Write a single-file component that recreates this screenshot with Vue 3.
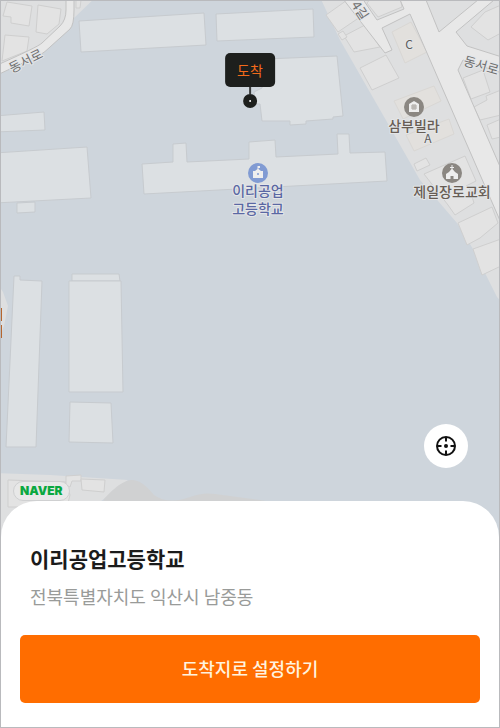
<script setup>
const campus = [
  'M79 21 L204 13 L206 45 L81 52Z',
  'M216 14 L313 9 L314 37 L217 41Z',
  'M266 59 L337 56 L343 116 L333 117 L333 119 L306 121 L306 124 L290 125 L290 121 L262 121 L260 104 L255 104 L254 92 L262 88Z',
  'M-5 116 L44 112 L45 130 L-5 132Z',
  'M-5 153 L87 147 L91 198 L-5 203Z',
  'M17 203 L35 202 L35 212 L17 213Z',
  'M142 164 L173 162 L173 144 L186 143 L187 162 L249 159 L249 142 L275 140 L276 157 L338 154 L337 134 L349 134 L350 153 L385 152 L387 181 L144 194Z',
  'M14 276 L20 276 L20 280 L42 281 L36 447 L6 447Z',
  'M72 274 L119 274 L120 281 L72 281Z',
  'M69 281 L121 281 L123 392 L69 392Z',
  'M70 402 L111 403 L113 443 L69 442Z',
]

const lots = [
  'M7 2 L32 6 L29 26 L11 23 L11 17 L3 16Z',
  'M38 5 L61 9 L59 24 L47 34 L36 32Z',
  'M5 35 L29 37 L27 51 L2 61Z',
  'M76 0 L81 0 L80 8 L76 8Z',
  'M326 15 L350 -2 L363 15 L338 32Z',
  'M344 36 L365 25 L380 47 L354 52Z',
  'M338 34 L343 31 L347 37 L342 40Z',
  'M360 68 L386 55 L399 78 L372 90Z',
  'M367 3 L372 -3 L400 -3 L402 7 L378 17Z',
  'M414 164 L426 158 L430 165 L417 171Z',
  'M424 174 L465 156 L476 181 L466 186 L470 190 L474 203 L455 215 L448 205Z',
  'M458 223 L492 207 L498 223 L480 238 L467 245Z',
  'M473 249 L501 239 L501 266 L482 275Z',
  'M471 27 L485 12 L501 5 L501 33 L488 40Z',
  'M463 78 L483 70 L490 92 L471 99Z',
  'M474 107 L487 100 L486 96 L501 90 L501 115 L480 120Z',
  'M487 125 L501 119 L501 137 L492 139Z',
  'M8 480 L66 482 L70 495 L67 507 L8 507Z',
  'M66 476 L81 475 L81 481 L72 481 L70 487 L66 485Z',
  'M81 479 L105 480 L104 492 L82 490Z',
]

const apartments = [
  'M392 32 L411 22 L427 52 L405 63Z',
  'M394 101 L434 86 L441 101 L403 119Z',
  'M406 135 L449 119 L454 134 L414 151Z',
]

const roads = [
  'M66 -5 V10 Q66 20 60 26 L42 43 Q38 47 -5 66 V76 L40 55 Q45 52 50 47 L70 29 Q74 25 74 10 V-5Z',
  'M340 -5 L385 53 L392 50 L382 28 L410 14 L505 232 V178 L458 70 L463 60 L505 74 V58 L467 46 L456 32 L500 -5 H484 L439 32 L424 -5 H398 L404 9 L377 20 L360 -5Z',
]
</script>

<template>
  <main class="screen">
    <section class="map" aria-label="지도">
      <svg class="tiles" viewBox="0 0 500 540" preserveAspectRatio="xMidYMin slice">
        <path class="land" d="M-5 -5 H98 L74 18 L45 50 L-5 74Z" />
        <path class="land" d="M319 -5 L340 40 L383 115 L420 180 L457 223 L473 249 L497 297 L505 306 V-5Z" />
        <path class="land" d="M-5 473 L50 475 L128 480 L100 502 L90 545 H-5Z" />
        <path class="hill" d="M104 499 Q121 480 132 480 Q142 480 154 495 Q168 505 190 497 Q203 492 215 494 L260 500 L320 510 V545 H90Z" />
        <path class="land" d="M-5 280 L3 292 L8 306 L4 326 L-5 348Z" />

        <path v-for="d in lots" :key="d" class="lot" :d="d" />
        <path v-for="d in apartments" :key="d" class="apartment" :d="d" />
        <path v-for="d in roads" :key="d" class="road" :d="d" />
        <path v-for="d in campus" :key="d" class="campus" :d="d" />

        <g class="road-name">
          <text transform="translate(28 65) rotate(-27)">동서로</text>
          <text transform="translate(480 70) rotate(16)">동서로</text>
          <text transform="translate(356 13) rotate(57)">4길</text>
        </g>
        <g class="unit">
          <text x="409" y="49">C</text>
          <text x="428" y="143">A</text>
        </g>

        <g class="poi">
          <circle cx="414" cy="107" r="10" />
          <path class="glyph" d="M414 101 L419 104 V112 H409 V104Z" />
          <path class="cutline" d="M412 105 H416 V109 H412Z M414 105 V109 M412 107 H416" />
          <text x="414" y="131">삼부빌라</text>
        </g>
        <g class="poi">
          <circle cx="452" cy="173" r="10" />
          <path class="glyph" d="M451.500 165 H452.500 V167 H454 V168 H452.500 V169 L455 172 L458 174 V179 H453.500 V176 H450.500 V179 H446 V174 L449 172 L451.500 169 V168 H450 V167 H451.500Z" />
          <text x="452" y="197">제일장로교회</text>
        </g>
        <g class="poi school">
          <circle cx="258" cy="173" r="10" />
          <path class="glyph" d="M257.500 166 H260 V168 H258.500 V169 L261 171 H263 V178 H253 V171 H255 L257.500 169Z" />
          <circle cx="258" cy="174" r="1" />
          <text x="258" y="196">이리공업</text>
          <text x="258" y="214">고등학교</text>
        </g>
        <path class="place-edge" d="M-5 308 H2 V321 H-5Z M-5 325 H2 V338 H-5Z" />
      </svg>

      <div class="marker">
        <span class="marker-label">도착</span>
        <span class="marker-stem"></span>
        <span class="marker-dot"></span>
      </div>

      <div class="map-tools">
        <button class="locate" type="button" aria-label="현재 위치">
          <svg viewBox="0 0 20 20">
            <circle cx="10" cy="10" r="9" />
            <path d="M10 1 V5.500 M10 14.500 V19 M1 10 H5.500 M14.500 10 H19" />
            <circle class="center" cx="10" cy="10" r="2" />
          </svg>
        </button>
        <span class="naver">NAVER</span>
      </div>
    </section>

    <section class="sheet">
      <h1>이리공업고등학교</h1>
      <p>전북특별자치도 익산시 남중동</p>
      <button class="confirm" type="button">도착지로 설정하기</button>
    </section>
  </main>
</template>

<style>
body {
  margin: 0;
}
</style>

<style scoped>
.screen {
  box-sizing: border-box;
  min-height: 100vh;
  display: flex;
  flex-direction: column;
  border: 1px solid #b9babd;
  background: #fff;
  font-family: "Noto Sans CJK KR", "Noto Sans", sans-serif;
}
.map {
  position: relative;
  flex: 1;
  display: flex;
  flex-direction: column;
  justify-content: flex-end;
  min-height: 320px;
  margin-bottom: -36px;
  padding-bottom: 36px;
  overflow: hidden;
  background: #ced5dc;
}
.tiles {
  position: absolute;
  inset: -1px;
  width: calc(100% + 2px);
  height: calc(100% + 2px);
}
.land {
  fill: #dedfe0;
}
.hill {
  fill: #d0d1d2;
}
.campus {
  fill: #dce0e3;
  stroke: #c7cbcf;
}
.lot {
  fill: #e3e3e3;
  stroke: #cfcfcf;
}
.apartment {
  fill: #e2e0dd;
  stroke: #d9d7d4;
}
.road {
  fill: #e8e8e8;
  stroke: #c2c2c2;
}
text {
  text-anchor: middle;
  paint-order: stroke;
  stroke: #e4e6e8;
  stroke-width: 2px;
  stroke-linejoin: round;
}
.road-name text {
  font-size: 13px;
  fill: #6f6f6f;
}
.unit text {
  font-size: 12px;
  fill: #5c5c5c;
}
.poi text {
  font-size: 14px;
  font-weight: 500;
  fill: #675d55;
}
.poi circle {
  fill: #8b8782;
}
.poi .glyph {
  fill: #eeeeee;
}
.cutline {
  fill: none;
  stroke: #aaa6a1;
}
.poi.school text {
  fill: #5a68a3;
}
.poi.school circle {
  fill: #819bd3;
}
.place-edge {
  fill: #b5662f;
}
.marker {
  position: absolute;
  top: 52px;
  left: 50%;
  transform: translateX(-50%);
  display: flex;
  flex-direction: column;
  align-items: center;
}
.marker-label {
  padding: 0 12px;
  border-radius: 5px;
  background: #1d1f1d;
  color: #f26a1b;
  font-size: 14px;
  line-height: 34px;
}
.marker-stem {
  width: 2px;
  height: 7px;
  background: #3a3c3c;
}
.marker-dot {
  width: 2px;
  height: 2px;
  border: 6px solid #1d1f1d;
  border-radius: 50%;
  background: #fff;
}
.map-tools {
  position: relative;
  display: flex;
  flex-direction: column;
  align-items: flex-start;
  gap: 13px;
  padding: 0 31px 0 12px;
}
.locate {
  align-self: flex-end;
  display: grid;
  place-items: center;
  width: 44px;
  height: 44px;
  padding: 0;
  border: 0;
  border-radius: 50%;
  background: #fff;
}
.locate svg {
  width: 20px;
  height: 20px;
  fill: none;
  stroke: #111;
  stroke-width: 2px;
}
.locate .center {
  fill: #111;
  stroke: none;
}
.naver {
  padding: 0 6px;
  border: 1px solid #cfd0d1;
  border-radius: 10px;
  background: #e8e8e8;
  color: #0aa83f;
  font-family: Inter, sans-serif;
  font-size: 12px;
  font-weight: 900;
  line-height: 18px;
}
.sheet {
  position: relative;
  display: flex;
  flex-direction: column;
  padding: 41px 19px 24px;
  border-radius: 36px 36px 0 0;
  background: #fff;
}
h1 {
  margin: 0 10px;
  color: #1b1b1b;
  font-size: 21px;
  font-weight: 700;
  line-height: 32px;
}
p {
  margin: 8px 10px 25px;
  color: #999b99;
  font-size: 18px;
  line-height: 28px;
}
.confirm {
  height: 68px;
  padding: 0 0 2px;
  border: 0;
  border-radius: 5px;
  background: #ff6d00;
  color: #fff3df;
  font-family: inherit;
  font-size: 18px;
  font-weight: 500;
}
</style>
